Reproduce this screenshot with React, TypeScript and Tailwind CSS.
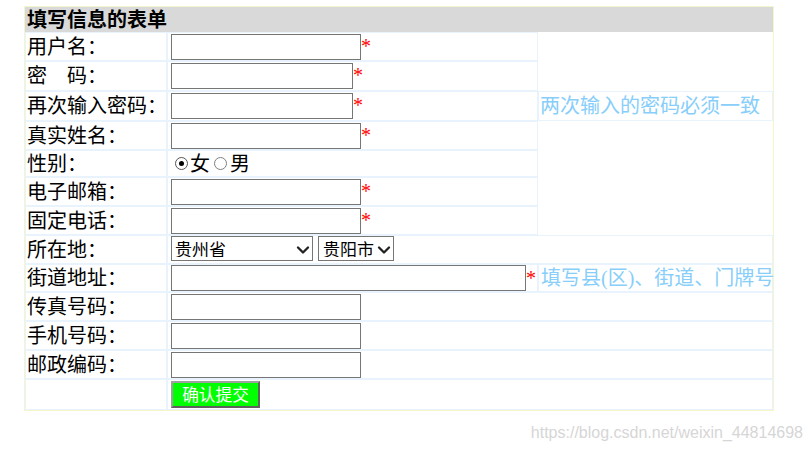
import React from 'react';
import { ChevronDown } from 'lucide-react';

const labelCls =
  "border border-[#e9f3fd] flex items-center pl-[1px] text-[20px] leading-none text-black whitespace-nowrap";
const midCls = "border border-[#e9f3fd] flex items-center pl-[3px]";
const hintCls =
  "border border-[#e9f3fd] flex items-center pl-[1px] text-[20px] leading-none text-[#87cefa] whitespace-nowrap";

function Star() {
  return (
    <span className="self-start mt-[3px] text-[20px] leading-none text-[#ff0000] font-['Liberation_Serif',serif]">
      *
    </span>
  );
}

function TextBox({ w, type = 'text' }: { w: string; type?: string }) {
  return (
    <input
      type={type}
      className={`${w} h-[26px] border border-[#767676] bg-white px-[2px] text-[16px] outline-none`}
    />
  );
}

function Picker({ w, pl, value }: { w: string; pl: string; value: string }) {
  return (
    <div className="relative">
      <select
        defaultValue={value}
        className={`${w} ${pl} appearance-none h-[25px] border border-[#767676] bg-white text-[17px] leading-none text-black font-['Noto_Sans_CJK_SC',sans-serif] outline-none`}
      >
        <option>{value}</option>
      </select>
      <ChevronDown
        size={20}
        strokeWidth={2.8}
        className="absolute right-0 top-1/2 -translate-y-1/2 pointer-events-none text-[#222]"
      />
    </div>
  );
}

function Radio({ checked }: { checked?: boolean }) {
  return (
    <span
      className={`w-[13px] h-[13px] rounded-full border flex items-center justify-center bg-white ${
        checked ? 'border-[#555]' : 'border-[#808080]'
      }`}
    >
      {checked && <span className="w-[5px] h-[5px] rounded-full bg-black" />}
    </span>
  );
}

export default function App() {
  return (
    <div className="min-h-screen bg-white pt-[6px] pl-[24px] font-['Liberation_Serif','Noto_Sans_CJK_SC',serif]">
      <div className="w-[750px] border border-[#f5f5cc]">
        {/* title bar */}
        <div className="h-[25px] bg-[#d9d9d9] flex items-center pl-[2px] text-[20px] font-bold leading-none text-black">
          填写信息的表单
        </div>

        <div className="grid grid-cols-[142px_371px_235px]">
          {/* 用户名 */}
          <div className={`${labelCls} h-[29px]`}>用户名：</div>
          <div className={midCls}>
            <TextBox w="w-[190px]" />
            <Star />
          </div>
          <div className="row-span-2" />

          {/* 密码 */}
          <div className={`${labelCls} h-[30px]`}>密　码：</div>
          <div className={midCls}>
            <TextBox w="w-[182px]" type="password" />
            <Star />
          </div>

          {/* 再次输入密码 */}
          <div className={`${labelCls} h-[30px]`}>再次输入密码：</div>
          <div className={midCls}>
            <TextBox w="w-[182px]" type="password" />
            <Star />
          </div>
          <div className={hintCls}>两次输入的密码必须一致</div>

          {/* 真实姓名 */}
          <div className={`${labelCls} h-[29px]`}>真实姓名：</div>
          <div className={midCls}>
            <TextBox w="w-[190px]" />
            <Star />
          </div>
          <div className="row-span-4" />

          {/* 性别 */}
          <div className={`${labelCls} h-[27px]`}>性别：</div>
          <div className={`${midCls} text-[20px] leading-none`}>
            <span className="ml-[4px]">
              <Radio checked />
            </span>
            <span className="ml-[2px]">女</span>
            <span className="ml-[4px]">
              <Radio />
            </span>
            <span className="ml-[3px]">男</span>
          </div>

          {/* 电子邮箱 */}
          <div className={`${labelCls} h-[29px]`}>电子邮箱：</div>
          <div className={midCls}>
            <TextBox w="w-[190px]" />
            <Star />
          </div>

          {/* 固定电话 */}
          <div className={`${labelCls} h-[29px]`}>固定电话：</div>
          <div className={midCls}>
            <TextBox w="w-[190px]" />
            <Star />
          </div>

          {/* 所在地 */}
          <div className={`${labelCls} h-[29px]`}>所在地：</div>
          <div className={`${midCls} col-span-2 gap-[5px]`}>
            <Picker w="w-[142px]" pl="pl-[3px]" value="贵州省" />
            <Picker w="w-[76px]" pl="pl-[4px]" value="贵阳市" />
          </div>

          {/* 街道地址 */}
          <div className={`${labelCls} h-[28px]`}>街道地址：</div>
          <div className={midCls}>
            <TextBox w="w-[355px]" />
            <Star />
          </div>
          <div className={`${hintCls} pl-[2px]`}>填写县(区)、街道、门牌号</div>

          {/* 传真号码 */}
          <div className={`${labelCls} h-[29px]`}>传真号码：</div>
          <div className={`${midCls} col-span-2`}>
            <TextBox w="w-[190px]" />
          </div>

          {/* 手机号码 */}
          <div className={`${labelCls} h-[29px]`}>手机号码：</div>
          <div className={`${midCls} col-span-2`}>
            <TextBox w="w-[190px]" />
          </div>

          {/* 邮政编码 */}
          <div className={`${labelCls} h-[29px]`}>邮政编码：</div>
          <div className={`${midCls} col-span-2`}>
            <TextBox w="w-[190px]" />
          </div>

          {/* submit */}
          <div className={`${labelCls} h-[31px]`} />
          <div className={`${midCls} col-span-2`}>
            <button
              type="submit"
              className="w-[89px] h-[27px] bg-[#00ff00] text-white text-[16.7px] leading-none border-2 border-t-[#a0a0a0] border-l-[#a0a0a0] border-r-[#606060] border-b-[#606060] font-['Noto_Sans_CJK_SC',sans-serif]"
            >
              确认提交
            </button>
          </div>
        </div>
      </div>

      <div className="flex justify-end pr-[9px] mt-[13px] text-[16px] leading-[18px] text-[#d6d6d6] font-['Liberation_Sans',Arial,sans-serif]">
        https://blog.csdn.net/weixin_44814698
      </div>
    </div>
  );
}
